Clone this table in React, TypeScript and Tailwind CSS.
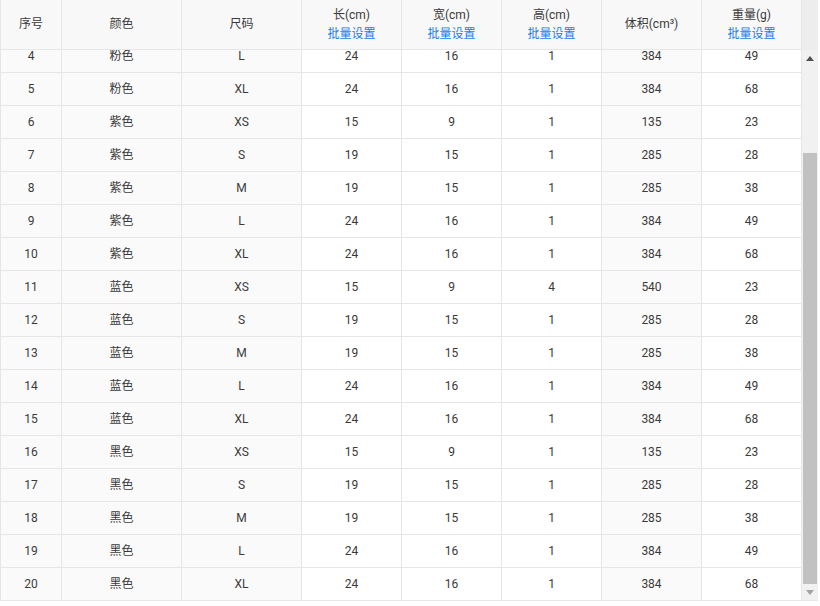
import React from "react";

type Row = [number, string, string, number, number, number, number, number];

const rows: Row[] = [
  [4, "粉色", "L", 24, 16, 1, 384, 49],
  [5, "粉色", "XL", 24, 16, 1, 384, 68],
  [6, "紫色", "XS", 15, 9, 1, 135, 23],
  [7, "紫色", "S", 19, 15, 1, 285, 28],
  [8, "紫色", "M", 19, 15, 1, 285, 38],
  [9, "紫色", "L", 24, 16, 1, 384, 49],
  [10, "紫色", "XL", 24, 16, 1, 384, 68],
  [11, "蓝色", "XS", 15, 9, 4, 540, 23],
  [12, "蓝色", "S", 19, 15, 1, 285, 28],
  [13, "蓝色", "M", 19, 15, 1, 285, 38],
  [14, "蓝色", "L", 24, 16, 1, 384, 49],
  [15, "蓝色", "XL", 24, 16, 1, 384, 68],
  [16, "黑色", "XS", 15, 9, 1, 135, 23],
  [17, "黑色", "S", 19, 15, 1, 285, 28],
  [18, "黑色", "M", 19, 15, 1, 285, 38],
  [19, "黑色", "L", 24, 16, 1, 384, 49],
  [20, "黑色", "XL", 24, 16, 1, 384, 68],
];

const widths = ["w-[61px]", "w-[120px]", "w-[120px]", "w-[100px]", "w-[100px]", "w-[100px]", "w-[100px]", "w-[100px]"];
const grayCol = [true, true, true, false, false, false, true, false];

const headers: [string, boolean][] = [
  ["序号", false],
  ["颜色", false],
  ["尺码", false],
  ["长(cm)", true],
  ["宽(cm)", true],
  ["高(cm)", true],
  ["体积(cm³)", false],
  ["重量(g)", true],
];

export default function App() {
  return (
    <div
      className="w-[820px] h-[606px] bg-white text-[12px] text-[#3a3a3a]"
      style={{ fontFamily: "Roboto, 'Noto Sans CJK SC', sans-serif" }}
    >
      <div className="flex w-[818px]">
        <div className="w-[802px] border-l border-[#e6e6e6]">
          <div className="flex h-[50px] border-b border-[#e6e6e6] bg-[#f8f8f8]">
            {headers.map(([t, link], i) => (
              <div
                key={i}
                className={`${widths[i]} shrink-0 border-r border-[#e6e6e6] flex flex-col items-center justify-center leading-[19px]`}
              >
                <span>{t}</span>
                {link && <span className="text-[#1a7bef]">批量设置</span>}
              </div>
            ))}
          </div>
          <div className="h-[551px] overflow-hidden flex flex-col justify-end">
            {rows.map((r) => (
              <div key={r[0]} className="flex h-[33px] shrink-0 border-b border-[#e6e6e6]">
                {r.map((v, i) => (
                  <div
                    key={i}
                    className={`${widths[i]} shrink-0 border-r border-[#e6e6e6] flex items-center justify-center ${grayCol[i] ? "bg-[#fafafa]" : "bg-white"}`}
                  >
                    {v}
                  </div>
                ))}
              </div>
            ))}
          </div>
        </div>
        <div className="w-[16px] flex flex-col">
          <div className="h-[50px] bg-[#ededed]" />
          <div className="h-[551px] bg-[#f1f1f1] flex flex-col border-b border-[#e6e6e6]">
            <div className="h-[16px] flex items-center justify-center">
              <svg width="8" height="5" viewBox="0 0 8 5">
                <path d="M4 0 L8 5 L0 5 Z" fill="#505050" />
              </svg>
            </div>
            <div className="flex-1" />
            <div className="h-[431px] mx-[1px] bg-[#c1c1c1]" />
            <div className="h-[16px] flex items-center justify-center">
              <svg width="8" height="5" viewBox="0 0 8 5">
                <path d="M0 0 L8 0 L4 5 Z" fill="#a3a3a3" />
              </svg>
            </div>
          </div>
        </div>
      </div>
    </div>
  );
}
